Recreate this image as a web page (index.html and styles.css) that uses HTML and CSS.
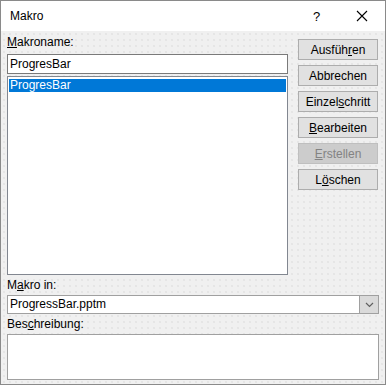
FILE: index.html
```html
<!DOCTYPE html>
<html lang="de">
<head>
    <meta charset="UTF-8">
    <title>Makro</title>
    <link rel="stylesheet" href="styles.css">
</head>
<body>
    <div class="window">
        <div class="titlebar">
            <span class="title">Makro</span>
            <span class="help">?</span>
            <span class="close">
                <svg width="12" height="12" viewBox="0 0 12 12"><path d="M1 1L11 11M11 1L1 11" stroke="#000" stroke-width="1.1" fill="none"/></svg>
            </span>
        </div>
        <div class="content">
            <div class="top-row">
                <div class="left-col">
                    <label class="label"><u>M</u>akroname:</label>
                    <div class="textbox">ProgresBar</div>
                    <div class="listbox">
                        <div class="list-item selected">ProgresBar</div>
                    </div>
                </div>
                <div class="buttons">
                    <div class="btn">Ausfüh<u>r</u>en</div>
                    <div class="btn">Abbrechen</div>
                    <div class="btn">Einzel<u>s</u>chritt</div>
                    <div class="btn"><u>B</u>earbeiten</div>
                    <div class="btn disabled"><u>E</u>rstellen</div>
                    <div class="btn">L<u>ö</u>schen</div>
                </div>
            </div>
            <label class="label lower">M<u>a</u>kro in:</label>
            <div class="combo">
                <span class="combo-text">ProgressBar.pptm</span>
                <span class="combo-btn">
                    <svg width="9" height="6" viewBox="0 0 9 6"><path d="M1 1L4.5 4.5L8 1" stroke="#606060" stroke-width="1.2" fill="none"/></svg>
                </span>
            </div>
            <label class="label lower">Bes<u>c</u>hreibung:</label>
            <div class="description"></div>
        </div>
    </div>
</body>
</html>
```

FILE: styles.css
```css
body {
    margin: 0;
    padding: 0;
    font-family: 'Liberation Sans', Arial, sans-serif;
    font-size: 12px;
    color: #000;
    background-color: #fff;
}

.window {
    width: 386px;
    height: 385px;
    box-sizing: border-box;
    border: 1px solid #8a8a8a;
    display: flex;
    flex-direction: column;
}

.titlebar {
    height: 30px;
    background-color: #fff;
    display: flex;
    align-items: center;
    padding-left: 9px;
}

.title {
    flex: 1;
}

.help {
    width: 12px;
    margin-right: 31px;
    font-size: 13px;
}

.close {
    display: flex;
    margin-right: 17px;
}

.content {
    flex: 1;
    background-color: #f0f0f0;
    background-image: radial-gradient(circle, #e2e2e2 0.6px, transparent 1px);
    background-size: 6px 6px;
    padding: 4px 6px 0 6px;
    display: flex;
    flex-direction: column;
}

.top-row {
    display: flex;
    gap: 10px;
}

.left-col {
    width: 281px;
    display: flex;
    flex-direction: column;
}

.label {
    display: block;
    line-height: 15px;
    margin-bottom: 4px;
}

.label.lower {
    margin-top: 3px;
    margin-bottom: 2px;
}

.textbox {
    height: 20px;
    box-sizing: border-box;
    border: 1px solid #7a7a7a;
    background-color: #fff;
    padding-left: 2px;
    line-height: 18px;
}

.listbox {
    margin-top: 2px;
    height: 199px;
    box-sizing: border-box;
    border: 1px solid #828790;
    background-color: #fff;
    padding: 2px 1px;
}

.list-item {
    height: 13px;
    line-height: 13px;
    padding-left: 1px;
}

.list-item.selected {
    background-color: #0078d7;
    color: #fff;
}

.buttons {
    width: 80px;
    margin-top: 4px;
    display: flex;
    flex-direction: column;
    gap: 5px;
}

.btn {
    height: 21px;
    box-sizing: border-box;
    border: 1px solid #adadad;
    background-color: #e1e1e1;
    display: flex;
    align-items: center;
    justify-content: center;
}

.btn.disabled {
    background-color: #cccccc;
    border-color: #bfbfbf;
    color: #838383;
}

.combo {
    height: 19px;
    box-sizing: border-box;
    border: 1px solid #a0a0a0;
    background-color: #fff;
    display: flex;
}

.combo-text {
    flex: 1;
    padding-left: 2px;
    line-height: 17px;
}

.combo-btn {
    width: 18px;
    background-color: #dadada;
    border-left: 1px solid #a0a0a0;
    display: flex;
    align-items: center;
    justify-content: center;
}

.description {
    height: 46px;
    box-sizing: border-box;
    border: 1px solid #a0a0a0;
    background-color: #fff;
}
```
